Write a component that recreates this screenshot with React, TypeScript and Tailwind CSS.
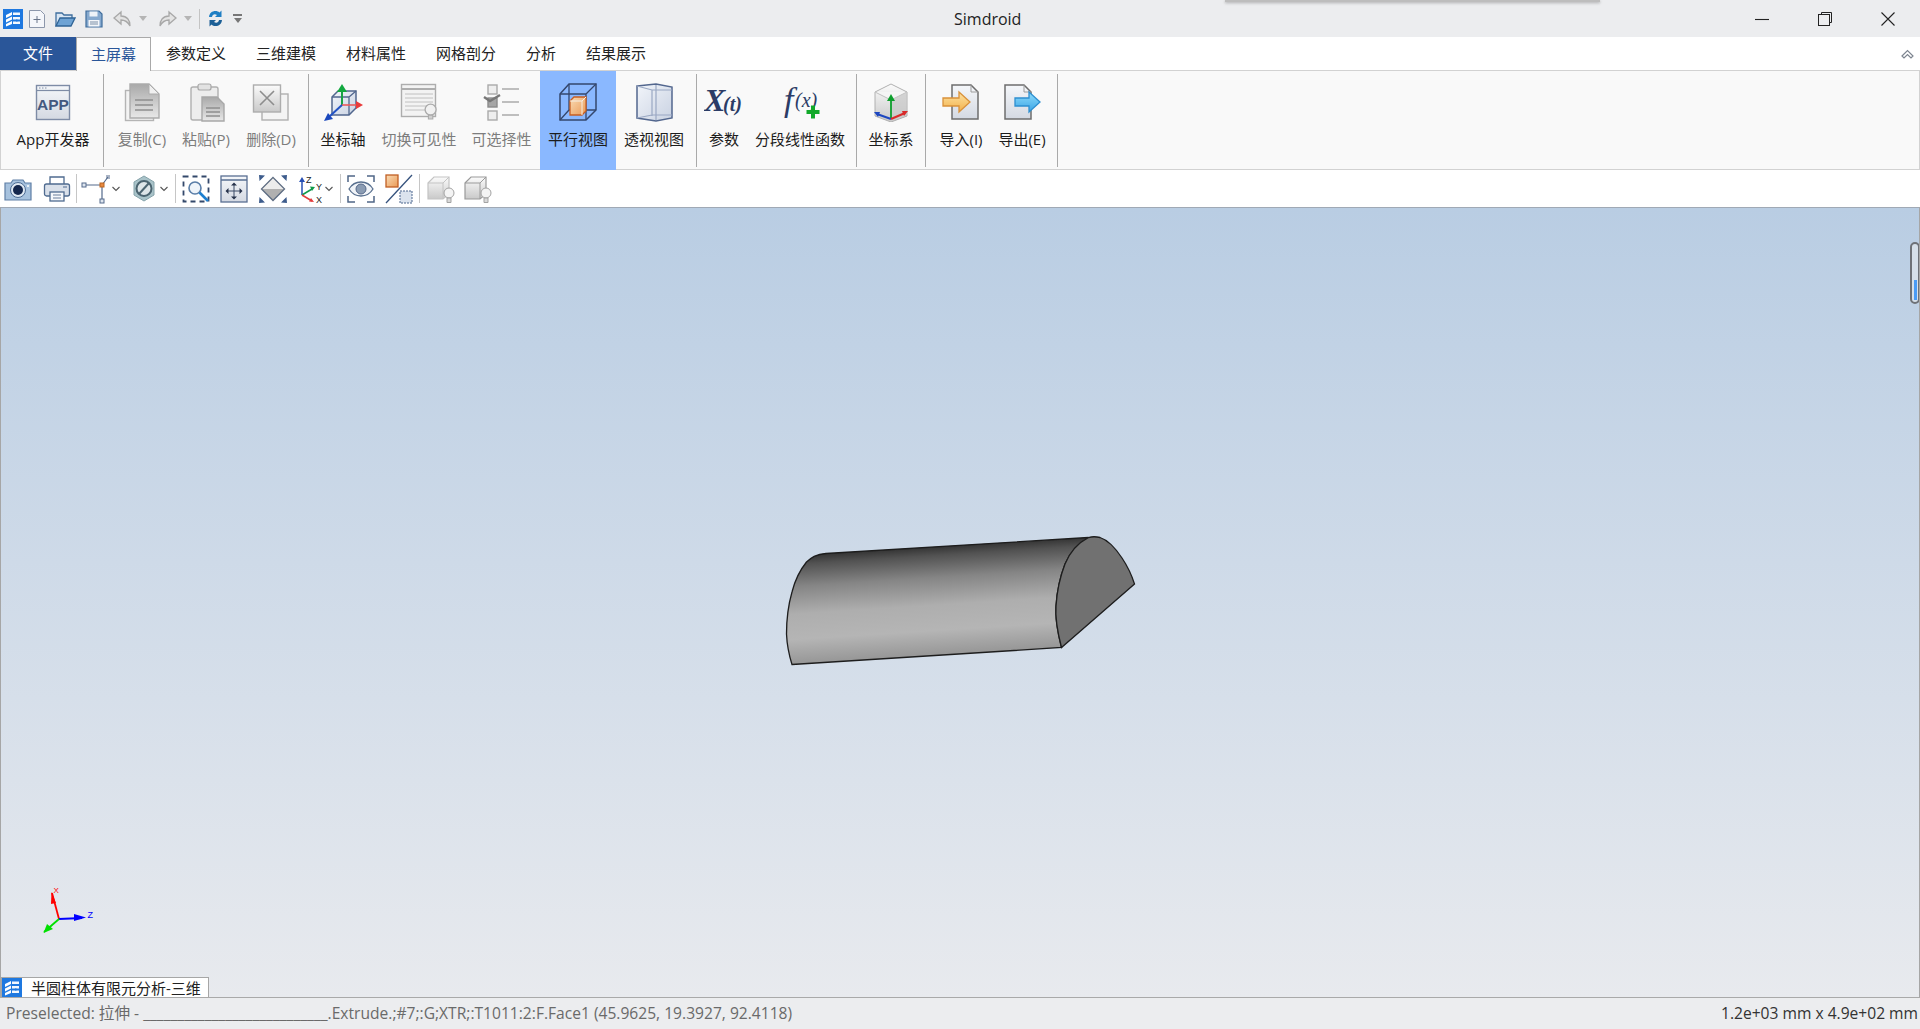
import { ReactNode } from "react";

const UI_FONT = `font-["Open_Sans","Noto_Sans_CJK_SC",sans-serif]`;

function Logo({ className }: { className: string }) {
  return (
    <svg viewBox="0 0 20 20" className={className}>
      <rect width="20" height="20" fill="#1e78e0" />
      <path d="M3 6 9 3v3L3 9zM3 10.500 9 7.500v3L3 13.500zM3 15l6-3v3l-6 2.500z" fill="#fff" />
      <path d="M10 3.500h7v2.500h-7zM10 8h7v2.500h-7zM10 12.500h7V15h-7z" fill="#fff" opacity=".95" />
      <path d="M13 6h1.500v2H13zM13 10.500h1.500v2H13z" fill="#1e78e0" />
    </svg>
  );
}

function QuickBar() {
  return (
    <div className="flex items-center">
      <Logo className="ml-[3px] h-[20px] w-[20px]" />
      <svg viewBox="0 0 18 20" className="ml-[5px] h-[20px] w-[18px]">
        <path d="M1.500 1.500h11l4 4v13h-15z" fill="#f4f6fa" stroke="#8c97ab" />
        <path d="M9 7v7M5.500 10.500h7" stroke="#69758a" />
      </svg>
      <svg viewBox="0 0 21 18" className="ml-[9px] h-[18px] w-[21px]">
        <path d="M1 16V3h6l2 2h8v3" fill="#d9e6f3" stroke="#3f6f9e" strokeWidth="1.300" />
        <path d="M1 16 5 8h15l-4 8z" fill="#6ea3d4" stroke="#2f6496" strokeWidth="1.300" />
      </svg>
      <svg viewBox="0 0 18 18" className="ml-[9px] h-[18px] w-[18px]">
        <path d="M1 1h13l3 3v13H1z" fill="#86a9ce" stroke="#3e6d9c" strokeWidth="1.200" />
        <rect x="4.500" y="1.500" width="8" height="5" fill="#eef3f8" />
        <rect x="3.500" y="10" width="11" height="6.500" fill="#f4f6f9" />
        <path d="M5 12h8M5 14h8" stroke="#7b8fa7" />
      </svg>
      <svg viewBox="0 0 19 18" className="ml-[10px] h-[18px] w-[19px]">
        <path d="M8 2 1 8l7 6v-4c4 0 7 2 9 6 0-6-3-10-9-10z" fill="#e3e3e3" stroke="#a8a8a8" strokeWidth="1.300" />
      </svg>
      <span className="ml-[7px] h-0 w-0 border-x-[4.500px] border-t-[5px] border-x-transparent border-t-[#b5b5b5]" />
      <svg viewBox="0 0 19 18" className="ml-[11px] h-[18px] w-[19px]">
        <path d="M11 2l7 6-7 6v-4c-4 0-7 2-9 6 0-6 3-10 9-10z" fill="#e3e3e3" stroke="#a8a8a8" strokeWidth="1.300" />
      </svg>
      <span className="ml-[7px] h-0 w-0 border-x-[4.500px] border-t-[5px] border-x-transparent border-t-[#b5b5b5]" />
      <span className="ml-[7px] h-[20px] w-px bg-[#c4c4c4]" />
      <svg viewBox="0 0 17 19" className="ml-[7px] h-[19px] w-[17px]">
        <path d="M2 8c.500-4 3-6 6.500-6 1.500 0 3 .500 4 1.500L14.500 1.500V8H8l2-2c-2.500-1.500-4.500-.500-5 2z" fill="#1f7fc4" />
        <path d="M15 11c-.500 4-3 6-6.500 6-1.500 0-3-.500-4-1.500L2.500 17.500V11H9l-2 2c2.500 1.500 4.500 .500 5-2z" fill="#1c5f96" />
      </svg>
      <div className="ml-[9px] flex w-[9px] flex-col items-center gap-[2px]">
        <span className="h-[2px] w-[9px] bg-[#777]" />
        <span className="h-0 w-0 border-x-[4.500px] border-t-[5px] border-x-transparent border-t-[#777]" />
      </div>
    </div>
  );
}

function TitleBar() {
  return (
    <header className="relative flex h-[37px] shrink-0 items-center bg-[#ecedef]">
      <div className="w-[954px]">
        <QuickBar />
      </div>
      <div className="pt-[1px] text-[16px] text-[#222]">Simdroid</div>
      <div className="flex flex-1 justify-end">
        <svg viewBox="0 0 16 16" className="mr-[47px] h-[16px] w-[16px]">
          <path d="M1 8.500h14" stroke="#222" strokeWidth="1.100" />
        </svg>
        <svg viewBox="0 0 16 16" className="mr-[47px] h-[16px] w-[16px]">
          <path d="M4.500 3.500V1.500h10v10h-2" fill="none" stroke="#222" />
          <rect x="1.500" y="3.500" width="11" height="11" fill="none" stroke="#222" />
        </svg>
        <svg viewBox="0 0 16 16" className="mr-[24px] h-[16px] w-[16px]">
          <path d="M1.500 1.500l13 13M14.500 1.500l-13 13" stroke="#222" strokeWidth="1.100" />
        </svg>
      </div>
      <div className="absolute left-[1225px] top-0 h-[2px] w-[375px] bg-[#bdbdbd] shadow-[0_1px_3px_rgba(0,0,0,0.3)]" />
    </header>
  );
}

function TabStrip() {
  const tabs = ["参数定义", "三维建模", "材料属性", "网格剖分", "分析", "结果展示"];
  return (
    <nav className="flex h-[33px] shrink-0 items-stretch bg-white text-[15px] text-[#222]">
      <div className="flex w-[76px] items-center justify-center bg-[#2a5699] text-white">文件</div>
      <div className="relative z-10 -mb-px flex w-[75px] items-center justify-center border-x border-t border-[#a9a9a9] bg-[#fafafa] text-[#2a5699]">
        主屏幕
      </div>
      {tabs.map((t) => (
        <div key={t} className="flex items-center px-[15px]">
          {t}
        </div>
      ))}
      <div className="ml-auto flex items-center pr-[6px]">
        <svg viewBox="0 0 13 10" className="h-[10px] w-[13px]">
          <path d="M1 7l5.500-5.500L12 7l-2 2-3.500-3.500L3 9z" fill="#fff" stroke="#7d8590" strokeWidth="1.200" />
        </svg>
      </div>
    </nav>
  );
}

function RibbonButton({
  width,
  label,
  disabled,
  active,
  children,
}: {
  width: string;
  label: string;
  disabled?: boolean;
  active?: boolean;
  children: ReactNode;
}) {
  return (
    <div
      className={`flex h-[99px] shrink-0 flex-col items-center ${width} ${active ? "bg-[#8ab8ff]" : ""}`}
    >
      <div className="mt-[11px] h-[40px]">{children}</div>
      <div
        className={`mt-[6px] whitespace-nowrap text-[15px] leading-[22px] ${disabled ? "text-[#7d7d7d]" : "text-[#1c1c1c]"}`}
      >
        {label}
      </div>
    </div>
  );
}

function Sep() {
  return <div className="mt-[3px] h-[93px] w-px shrink-0 bg-[#a9a9a9]" />;
}

const icon = "h-[40px] w-[40px]";

function Gradients() {
  return (
    <svg className="absolute h-0 w-0">
      <defs>
        <linearGradient id="grayDoc" x1="0" y1="0" x2="0" y2="1">
          <stop offset="0" stopColor="#a9a9a9" />
          <stop offset="1" stopColor="#e8e8e8" />
        </linearGradient>
        <linearGradient id="paper" x1="0" y1="0" x2="0" y2="1">
          <stop offset="0" stopColor="#f5f7fa" />
          <stop offset="1" stopColor="#d4d9e2" />
        </linearGradient>
        <linearGradient id="glass" x1="0" y1="0" x2="1" y2="1">
          <stop offset="0" stopColor="#f2f5fa" />
          <stop offset="1" stopColor="#c9d2e2" />
        </linearGradient>
        <linearGradient id="orange" x1="0" y1="0" x2="1" y2="1">
          <stop offset="0" stopColor="#f9dcb6" />
          <stop offset="1" stopColor="#ea9a56" />
        </linearGradient>
        <linearGradient id="yellowArrow" x1="0" y1="0" x2="0" y2="1">
          <stop offset="0" stopColor="#fde3a4" />
          <stop offset="1" stopColor="#f2b04a" />
        </linearGradient>
        <linearGradient id="blueArrow" x1="0" y1="0" x2="0" y2="1">
          <stop offset="0" stopColor="#8fdcfb" />
          <stop offset="1" stopColor="#3aa5e6" />
        </linearGradient>
        <linearGradient id="cubeGray" x1="0" y1="0" x2="0" y2="1">
          <stop offset="0" stopColor="#fbfbfb" />
          <stop offset="1" stopColor="#c9c9c9" />
        </linearGradient>
      </defs>
    </svg>
  );
}

function Bulb({ x, y, s = 1 }: { x: number; y: number; s?: number }) {
  return (
    <g transform={`translate(${x} ${y}) scale(${s})`}>
      <circle cx="6" cy="6" r="5" fill="#f1f1f1" stroke="#ababab" strokeWidth="1.200" />
      <path d="M4 11h4v3.500H4z" fill="#d0d0d0" stroke="#ababab" />
    </g>
  );
}

function Ribbon() {
  return (
    <section className="flex h-[100px] shrink-0 border border-[#d2d2d2] bg-[#f9f9f9] pl-[2px]">
      <RibbonButton width="w-[100px]" label="App开发器">
        <svg viewBox="0 0 40 40" className={icon}>
          <rect x="3.500" y="3.500" width="33" height="34" fill="url(#paper)" stroke="#7e8ca6" strokeWidth="1.400" />
          <path d="M4 8.500h32" stroke="#7e8ca6" strokeWidth="1.200" />
          <path d="M6 6h1.500M9 6h1.500M12 6h1.500" stroke="#7e8ca6" />
          <text x="20" y="28" textAnchor="middle" fontSize="15.500" fontWeight="700" fontFamily="Liberation Sans, sans-serif" fill="#44597f">APP</text>
        </svg>
      </RibbonButton>
      <Sep />
      <div className="ml-[6px] flex">
        <RibbonButton width="w-[64px]" label="复制(C)" disabled>
          <svg viewBox="0 0 40 40" className={icon}>
            <rect x="3.500" y="8.500" width="28" height="30" fill="#f3f3f3" stroke="#b4b4b4" strokeWidth="1.400" />
            <path d="M8 2h19l10 10v24H8z" fill="url(#grayDoc)" stroke="#acacac" strokeWidth="1.400" />
            <path d="M27 2v10h10z" fill="#f0f0f0" stroke="#acacac" />
            <path d="M13 18h18M13 23h18M13 28h18" stroke="#8f8f8f" strokeWidth="1.400" />
          </svg>
        </RibbonButton>
        <RibbonButton width="w-[64px]" label="粘贴(P)" disabled>
          <svg viewBox="0 0 40 40" className={icon}>
            <rect x="5" y="5" width="27" height="33" rx="2" fill="#ededed" stroke="#b0b0b0" strokeWidth="1.400" />
            <rect x="12" y="2" width="13" height="6" rx="2" fill="#e2e2e2" stroke="#a8a8a8" strokeWidth="1.200" />
            <path d="M16 15h15l7 7v17H16z" fill="url(#grayDoc)" stroke="#a8a8a8" strokeWidth="1.400" />
            <path d="M20 26h14M20 30h14M20 34h14" stroke="#8f8f8f" strokeWidth="1.300" />
          </svg>
        </RibbonButton>
        <RibbonButton width="w-[66px]" label="删除(D)" disabled>
          <svg viewBox="0 0 40 40" className={icon}>
            <rect x="11" y="12" width="26" height="26" fill="#f4f4f4" stroke="#b0b0b0" strokeWidth="1.400" />
            <rect x="2.500" y="3" width="27" height="27" fill="url(#cubeGray)" stroke="#adadad" strokeWidth="1.400" />
            <path d="M9 9l14 14M23 9 9 23" stroke="#8d8d8d" strokeWidth="1.600" />
          </svg>
        </RibbonButton>
      </div>
      <div className="ml-[4px]"><Sep /></div>
      <div className="ml-[2px] flex">
        <RibbonButton width="w-[64px]" label="坐标轴">
          <svg viewBox="0 0 40 40" className={icon}>
            <path d="M9 15l6-6h18v17l-7 7H9z" fill="url(#glass)" stroke="#51678e" strokeWidth="1.500" />
            <path d="M9 15h17v18M26 15l7-6" fill="none" stroke="#51678e" strokeWidth="1.300" />
            <path d="M19 23V9" stroke="#19a245" strokeWidth="2" />
            <path d="M19 2l5 8H14z" fill="#12a83f" />
            <path d="M19 23h15" stroke="#ec5a5a" strokeWidth="1.600" />
            <path d="M40 23l-7-4v8z" fill="#e93b3b" />
            <path d="M19 23 7 34" stroke="#2353c4" strokeWidth="2" />
            <path d="M1 39l9-2-5-6z" fill="#1b48bd" />
          </svg>
        </RibbonButton>
        <RibbonButton width="w-[88px]" label="切换可见性" disabled>
          <svg viewBox="0 0 40 40" className={icon}>
            <rect x="2.500" y="2.500" width="34" height="32" fill="#f3f3f3" stroke="#adadad" strokeWidth="1.400" />
            <path d="M3 7h33" stroke="#adadad" strokeWidth="2" />
            <path d="M6 12h28M6 16h28M6 20h28M6 24h22M6 28h20" stroke="#c0c0c0" />
            <Bulb x={25} y={21} s={1.100} />
          </svg>
        </RibbonButton>
        <RibbonButton width="w-[77px]" label="可选择性" disabled>
          <svg viewBox="0 0 40 40" className={icon}>
            <rect x="6" y="3" width="9" height="9" fill="#eee" stroke="#aaa" strokeWidth="1.400" />
            <rect x="6" y="16" width="9" height="9" fill="#a6a6a6" stroke="#8c8c8c" strokeWidth="1.400" />
            <rect x="6" y="29" width="9" height="9" fill="#eee" stroke="#aaa" strokeWidth="1.400" />
            <path d="M2 15l6 4 10-6" fill="none" stroke="#777" strokeWidth="2.400" />
            <path d="M20 7h17M20 20h17M20 33h17" stroke="#ababab" strokeWidth="1.400" />
          </svg>
        </RibbonButton>
        <RibbonButton width="w-[76px]" label="平行视图" active>
          <svg viewBox="0 0 40 40" className={icon}>
            <path d="M2 12 11 2h27v26l-10 10H2z" fill="none" stroke="#34476d" strokeWidth="1.500" />
            <path d="M2 12h26v26M28 12 38 2M2 38l9-10h27M11 2v26" fill="none" stroke="#34476d" strokeWidth="1.300" />
            <path d="M12 19l4-4h12v14l-4 4H12z" fill="url(#orange)" stroke="#c75f22" strokeWidth="1.300" />
            <path d="M12 19h12v14M24 19l4-4" fill="none" stroke="#f6efe6" />
          </svg>
        </RibbonButton>
        <RibbonButton width="w-[76px]" label="透视视图">
          <svg viewBox="0 0 40 40" className={icon}>
            <path d="M3 4 22 2l16 3v31l-16 3-19-3z" fill="url(#glass)" stroke="#53678e" strokeWidth="1.500" />
            <path d="M22 3v35M3 4l15 4h20M18 8v26M3 36l15-3h20" fill="none" stroke="#9aa8c3" strokeWidth="1.200" />
          </svg>
        </RibbonButton>
      </div>
      <div className="ml-[4px]"><Sep /></div>
      <div className="ml-[3px] flex">
        <RibbonButton width="w-[48px]" label="参数">
          <svg viewBox="0 0 40 40" className={icon}>
            <text x="0" y="29" fontSize="32" fontWeight="700" fontStyle="italic" fontFamily="Liberation Serif, serif" fill="#2c3c66">X</text>
            <text x="19" y="29" fontSize="20" fontStyle="italic" fontWeight="700" fontFamily="Liberation Serif, serif" fill="#2c3c66">(t)</text>
          </svg>
        </RibbonButton>
        <RibbonButton width="w-[104px]" label="分段线性函数">
          <svg viewBox="0 0 40 40" className={icon}>
            <text x="4" y="29" fontSize="34" fontStyle="italic" fontFamily="Liberation Serif, serif" fill="#2c3c66">f</text>
            <text x="15" y="25" fontSize="20" fontStyle="italic" fontFamily="Liberation Serif, serif" fill="#2c3c66">(x)</text>
            <path d="M33 23.500v13M26.500 30h13" stroke="#12a92a" strokeWidth="4" />
          </svg>
        </RibbonButton>
      </div>
      <div className="ml-[4px]"><Sep /></div>
      <RibbonButton width="w-[68px]" label="坐标系">
        <svg viewBox="0 0 40 40" className={icon}>
          <path d="M20 2 36 10v24l-16 6-16-6V10z" fill="url(#cubeGray)" stroke="#b0b0b0" />
          <path d="M4 10l16 8 16-8" fill="#f5f5f5" stroke="#c0c0c0" />
          <path d="M20 18v20l16-5V10z" fill="#c8c8c8" opacity=".7" />
          <path d="M20 37V17" stroke="#0d9e2c" strokeWidth="1.800" />
          <path d="M20 12l4 7h-8z" fill="#0d9e2c" />
          <path d="M20 37 6 32" stroke="#1d47c0" strokeWidth="2" />
          <path d="M20 37l14-6" stroke="#d92a2a" strokeWidth="2" />
          <path d="M37 29l-6 0 2 5z" fill="#d92a2a" />
          <path d="M3 30l6 0-2 5z" fill="#1d47c0" />
        </svg>
      </RibbonButton>
      <Sep />
      <div className="ml-[4px] flex">
        <RibbonButton width="w-[62px]" label="导入(I)">
          <svg viewBox="0 0 40 40" className={icon}>
            <path d="M11 3h19l7 7v27H11z" fill="url(#paper)" stroke="#6d6d6d" strokeWidth="1.500" />
            <path d="M30 3v7h7" fill="none" stroke="#9d9d9d" />
            <path d="M2 16h16v-6l11 10-11 10v-6H2z" fill="url(#yellowArrow)" stroke="#d9913a" strokeWidth="1.300" />
          </svg>
        </RibbonButton>
        <RibbonButton width="w-[60px]" label="导出(E)">
          <svg viewBox="0 0 40 40" className={icon}>
            <path d="M3 3h19l7 7v27H3z" fill="url(#paper)" stroke="#6d6d6d" strokeWidth="1.500" />
            <path d="M22 3v7h7" fill="none" stroke="#9d9d9d" />
            <path d="M13 16h14v-6l11 10-11 10v-6H13z" fill="url(#blueArrow)" stroke="#2d8fd0" strokeWidth="1.300" />
          </svg>
        </RibbonButton>
      </div>
      <div className="ml-[5px]"><Sep /></div>
    </section>
  );
}

function Chevron({ className }: { className: string }) {
  return (
    <svg viewBox="0 0 8 6" className={`h-[6px] w-[8px] ${className}`}>
      <path d="M.500 1 4 4.500 7.500 1" fill="none" stroke="#555" strokeWidth="1.100" />
    </svg>
  );
}

function ToolSep({ className }: { className: string }) {
  return <span className={`h-[29px] w-px bg-[#c6c6c6] ${className}`} />;
}

const tool = "h-[30px] w-[28px]";

function CubeBulb({ stroke }: { stroke: string }) {
  return (
    <svg viewBox="0 0 28 30" className={tool}>
      <path d="M1 9l6-6h15v17l-6 5H1z" fill="url(#cubeGray)" stroke={stroke} strokeWidth="1.200" />
      <path d="M1 9h15v16M16 9l6-6" fill="none" stroke={stroke} />
      <circle cx="22" cy="19" r="5" fill="#f4f4f4" stroke="#a3a3a3" />
      <path d="M20 24h4v4.500h-4z" fill="#d9d9d9" stroke="#a3a3a3" />
    </svg>
  );
}

function ViewToolbar() {
  return (
    <div className="flex h-[37px] shrink-0 items-center bg-white">
      <div className="ml-[4px]">
        <svg viewBox="0 0 28 30" className={tool}>
          <path d="M1 9h6l2-3h10l2 3h6v17H1z" fill="#a7c2de" stroke="#5f7fa6" strokeWidth="1.200" />
          <circle cx="14" cy="16" r="7.500" fill="#dfe8f2" stroke="#4d6c94" />
          <circle cx="14" cy="16" r="5" fill="#15274d" />
          <circle cx="24" cy="12" r="1" fill="#fff" />
        </svg>
      </div>
      <div className="ml-[11px]">
        <svg viewBox="0 0 28 30" className={tool}>
          <path d="M7 10V3h14v7" fill="#fff" stroke="#4f6b90" strokeWidth="1.300" />
          <rect x="1.500" y="10" width="25" height="12" rx="2" fill="#d9e0ea" stroke="#4f6b90" strokeWidth="1.300" />
          <path d="M20 13h4" stroke="#4f6b90" />
          <rect x="7" y="18" width="14" height="9" fill="#f6f8fb" stroke="#4f6b90" strokeWidth="1.300" />
          <path d="M10 21h8M10 24h8" stroke="#6b7f9c" />
        </svg>
      </div>
      <ToolSep className="ml-[5px]" />
      <div className="ml-[4px]">
        <svg viewBox="0 0 29 30" className="h-[30px] w-[29px]">
          <path d="M3 11h18v16M21 11l6-8" fill="none" stroke="#546a8c" strokeWidth="1.200" />
          <rect x="1" y="9" width="4" height="4" fill="#dfe6ef" stroke="#546a8c" />
          <rect x="19" y="25" width="4" height="4" fill="#dfe6ef" stroke="#546a8c" />
          <rect x="19" y="9" width="4" height="4" fill="#e8893f" stroke="#b96420" />
          <path d="M26 1v4M28 1v4" stroke="#546a8c" />
        </svg>
      </div>
      <Chevron className="ml-[2px]" />
      <div className="ml-[12px]">
        <svg viewBox="0 0 24 30" className="h-[30px] w-[24px]">
          <path d="M12 2l10 6v13l-10 6-10-6V8z" fill="#a9c3c9" stroke="#86a3aa" />
          <circle cx="12" cy="14.500" r="7.500" fill="#dde5e8" stroke="#4b6470" strokeWidth="2" />
          <path d="M7 20 17 9" stroke="#4b6470" strokeWidth="2" />
        </svg>
      </div>
      <Chevron className="ml-[4px]" />
      <ToolSep className="ml-[7px]" />
      <div className="ml-[6px]">
        <svg viewBox="0 0 28 30" className={tool}>
          <rect x="1.500" y="2.500" width="25" height="25" fill="none" stroke="#33486b" strokeWidth="1.800" strokeDasharray="5 4" />
          <circle cx="13" cy="14" r="6" fill="#eef4fa" stroke="#5a7ea8" strokeWidth="1.600" />
          <path d="M17.500 18.500 26 27" stroke="#1d7fd0" strokeWidth="2.600" />
        </svg>
      </div>
      <div className="ml-[10px]">
        <svg viewBox="0 0 28 30" className={tool}>
          <rect x="1" y="2" width="26" height="26" fill="url(#paper)" stroke="#596f92" strokeWidth="1.300" />
          <path d="M1 6h26" stroke="#596f92" strokeWidth="1.500" />
          <path d="M14 10v14M7 17h14" stroke="#3a4a66" />
          <path d="M14 8.500l3 3h-6zM14 25.500l3-3h-6zM5.500 17l3-3v6zM22.500 17l-3-3v6z" fill="#26324a" />
        </svg>
      </div>
      <div className="ml-[11px]">
        <svg viewBox="0 0 28 30" className={tool}>
          <path d="M14 3.500 25.500 15 14 26.500 2.500 15z" fill="#b0b0b0" stroke="#5d6c82" strokeWidth="1.300" />
          <path d="M3.500 15h21L14 4.500z" fill="#ececec" />
          <path d="M0 1l6 .5L.500 7zM28 1l-6 .5L27.500 7zM0 29l6-.5L.500 23zM28 29l-6-.5 5.500-5.500z" fill="#3d5c8c" />
        </svg>
      </div>
      <div className="ml-[10px]">
        <svg viewBox="0 0 26 30" className="h-[30px] w-[26px]">
          <path d="M5 21V7" stroke="#2850b4" strokeWidth="1.500" />
          <path d="M5 3l3 5H2z" fill="#2850b4" />
          <path d="M5 21l10-6" stroke="#109a4a" strokeWidth="1.500" />
          <path d="M18 13l-5-.5 2 4.500z" fill="#109a4a" />
          <path d="M5 21l10 6" stroke="#e23c3c" strokeWidth="1.500" />
          <path d="M17 28l-5-.5 2-3.500z" fill="#e23c3c" />
          <text x="9" y="9" fontSize="9" fontFamily="Liberation Sans, sans-serif" fill="#222">Z</text>
          <text x="19" y="16" fontSize="9" fontFamily="Liberation Sans, sans-serif" fill="#222">Y</text>
          <text x="19" y="29" fontSize="9" fontFamily="Liberation Sans, sans-serif" fill="#222">X</text>
        </svg>
      </div>
      <Chevron className="ml-[2px]" />
      <ToolSep className="ml-[7px]" />
      <div className="ml-[6px]">
        <svg viewBox="0 0 28 30" className={tool}>
          <path d="M1 8V2h7M20 2h7v6M1 22v6h7M20 28h7v-6" fill="none" stroke="#4f6687" strokeWidth="1.500" />
          <path d="M2 15c3-5 7-7 12-7s9 2 12 7c-3 5-7 7-12 7s-9-2-12-7z" fill="#f1f4f8" stroke="#59708f" strokeWidth="1.300" />
          <circle cx="14" cy="15" r="5" fill="#8b9cb3" stroke="#56698a" />
        </svg>
      </div>
      <div className="ml-[10px]">
        <svg viewBox="0 0 28 30" className={tool}>
          <rect x="1" y="1" width="12" height="12" fill="url(#orange)" stroke="#c05f24" strokeWidth="1.300" />
          <path d="M1 29 27 1" stroke="#34517c" strokeWidth="1.300" />
          <rect x="15" y="17" width="12" height="12" fill="#dbe3ee" stroke="#4c668e" strokeDasharray="2 1" />
        </svg>
      </div>
      <ToolSep className="ml-[6px]" />
      <div className="ml-[7px]"><CubeBulb stroke="#c4c4c4" /></div>
      <div className="ml-[9px]"><CubeBulb stroke="#9a9a9a" /></div>
    </div>
  );
}

// cylinder section + triad, coordinates are page pixels
function Model() {
  return (
    <svg className="absolute left-0 top-0 h-[790px] w-[1918px]" viewBox="1 208 1918 790">
      <defs>
        <linearGradient id="shell" gradientUnits="userSpaceOnUse" x1="925" y1="545" x2="932" y2="655">
          <stop offset="0" stopColor="#2c2c2c" />
          <stop offset="0.1" stopColor="#525252" />
          <stop offset="0.3" stopColor="#858585" />
          <stop offset="0.55" stopColor="#aeaeae" />
          <stop offset="0.78" stopColor="#b5b5b5" />
          <stop offset="1" stopColor="#979797" />
        </linearGradient>
      </defs>
      <path
        d="M792 664.500 1061.500 647.500C1057 630 1055 618 1056 606C1057 590 1060 577 1065 564C1070 552 1078 543 1088.500 537.500L826 553.500C816 554 811 558 806.500 562C800 570 795 580 792 592C788 606 786.500 620 786.500 634C787 645 789 655 792 664.500Z"
        fill="url(#shell)"
        stroke="#1d1d1d"
        strokeWidth="1.300"
      />
      <path
        d="M1088.500 537.500C1092 536.500 1096 536.500 1100 537.500C1108 540 1116 549 1122 558C1128 567 1132 576 1134.500 584L1061.500 647.500C1057 630 1055 618 1056 606C1057 590 1060 577 1065 564C1070 552 1078 543 1088.500 537.500Z"
        fill="#717171"
        stroke="#1d1d1d"
        strokeWidth="1.300"
      />
      <path d="M59 919 52 893" stroke="#ff0000" strokeWidth="1.800" />
      <path d="M51.500 892 56 903 51 904z" fill="#ff0000" />
      <path d="M59 919 82 918" stroke="#0000ff" strokeWidth="1.800" />
      <path d="M86 917.500 74 914v7z" fill="#0000ff" />
      <path d="M59 919 44 932" stroke="#00e000" strokeWidth="1.800" />
      <path d="M43.500 933 47 924 53 929z" fill="#00e000" />
      <text x="53.500" y="893" fontSize="8" fontFamily="Liberation Sans, sans-serif" fill="#ff0000">X</text>
      <text x="87.500" y="918" fontSize="9" fontFamily="Liberation Sans, sans-serif" fill="#0000ff">Z</text>
    </svg>
  );
}

function Viewport() {
  return (
    <main className="relative min-h-0 flex-1 overflow-hidden border-x border-t border-x-[#a6a6a6] border-t-[#a0a9b5] bg-gradient-to-b from-[#b9cde3] to-[#e8eaee]">
      <Model />
      <div className="absolute right-[-1px] top-[34px] flex h-[62px] w-[10px] items-end justify-center rounded-[5px] border-2 border-[#6e7278] bg-[#d6e0ea] pb-[2px]">
        <span className="h-[20px] w-[3px] bg-[#4a9bf5]" />
      </div>
      <div className="absolute bottom-0 left-0 flex h-[20px] w-[208px] items-center border border-[#a6a6a6] border-b-0 bg-white">
        <Logo className="h-[20px] w-[20px] shrink-0" />
        <span className="ml-[9px] whitespace-nowrap text-[15px] leading-[18px] text-[#222]">
          半圆柱体有限元分析-三维
        </span>
      </div>
    </main>
  );
}

function StatusBar() {
  return (
    <footer className="flex h-[32px] shrink-0 items-center justify-between border-t border-[#a9a9a9] bg-[#ecedef] pl-[6px] pr-[2px] text-[15.6px]">
      <span className="whitespace-nowrap text-[#6a6a6a]">
        Preselected: 拉伸 - ___________________________.Extrude.;#7;:G;XTR;:T1011:2:F.Face1 (45.9625, 19.3927, 92.4118)
      </span>
      <span className="whitespace-nowrap text-[#333]">1.2e+03 mm x 4.9e+02 mm</span>
    </footer>
  );
}

export default function App() {
  return (
    <div className={`flex h-screen w-full flex-col overflow-hidden bg-white ${UI_FONT}`}>
      <Gradients />
      <TitleBar />
      <TabStrip />
      <Ribbon />
      <ViewToolbar />
      <Viewport />
      <StatusBar />
    </div>
  );
}
